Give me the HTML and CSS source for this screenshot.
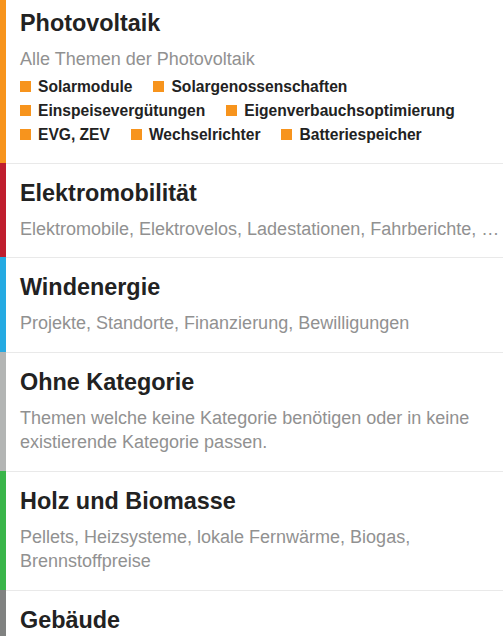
FILE: index.html
```html
<!DOCTYPE html>
<html lang="de">
<head>
<meta charset="utf-8">
<title>Kategorien</title>
<link rel="stylesheet" href="styles.css">
</head>
<body>
<div class="category-list">
  <div class="category-box c-orange">
    <div class="category-inner">
      <h3 class="category-title">Photovoltaik</h3>
      <div class="category-desc">Alle Themen der Photovoltaik</div>
      <div class="subcategories">
        <span class="subcat"><span class="sq"></span>Solarmodule</span>
        <span class="subcat"><span class="sq"></span>Solargenossenschaften</span>
        <span class="subcat"><span class="sq"></span>Einspeisevergütungen</span>
        <span class="subcat"><span class="sq"></span>Eigenverbauchsoptimierung</span>
        <span class="subcat"><span class="sq"></span>EVG, ZEV</span>
        <span class="subcat"><span class="sq"></span>Wechselrichter</span>
        <span class="subcat"><span class="sq"></span>Batteriespeicher</span>
      </div>
    </div>
  </div>
  <div class="category-box c-red">
    <div class="category-inner">
      <h3 class="category-title">Elektromobilität</h3>
      <div class="category-desc single">Elektromobile, Elektrovelos, Ladestationen, Fahrberichte, …</div>
    </div>
  </div>
  <div class="category-box c-blue">
    <div class="category-inner">
      <h3 class="category-title">Windenergie</h3>
      <div class="category-desc">Projekte, Standorte, Finanzierung, Bewilligungen</div>
    </div>
  </div>
  <div class="category-box c-gray">
    <div class="category-inner">
      <h3 class="category-title">Ohne Kategorie</h3>
      <div class="category-desc">Themen welche keine Kategorie benötigen oder in keine existierende Kategorie passen.</div>
    </div>
  </div>
  <div class="category-box c-green">
    <div class="category-inner">
      <h3 class="category-title">Holz und Biomasse</h3>
      <div class="category-desc">Pellets, Heizsysteme, lokale Fernwärme, Biogas, Brennstoffpreise</div>
    </div>
  </div>
  <div class="category-box c-darkgray">
    <div class="category-inner">
      <h3 class="category-title">Gebäude</h3>
      <div class="category-desc">Energieeffizienz, Sanierung, Dämmung, Heizung</div>
    </div>
  </div>
</div>
</body>
</html>
```
FILE: styles.css
```css
html, body {
  margin: 0;
  padding: 0;
  background: #fff;
}
body {
  font-family: "Liberation Sans", Arial, sans-serif;
  color: #222;
  height: 636px;
  overflow: hidden;
}
.category-list {
  margin-top: -6px;
}
.category-box {
  display: flex;
  border-left: 6px solid #b3b5b4;
}
.c-orange { border-left-color: #f7941d; }
.c-red { border-left-color: #bf1e2e; }
.c-blue { border-left-color: #25aae2; }
.c-gray { border-left-color: #b3b5b4; }
.c-green { border-left-color: #3ab54a; }
.c-darkgray { border-left-color: #808281; }
.category-inner {
  flex: 1;
  min-width: 0;
  padding: 15px 14px 16px 14px;
}
.category-box + .category-box .category-inner {
  border-top: 1px solid #e9e9e9;
}
.category-title {
  margin: 0 0 10px 0;
  font-size: 23.4px;
  line-height: 28px;
  font-weight: bold;
  color: #222;
}
.category-desc {
  font-size: 18px;
  line-height: 24.5px;
  color: #919191;
}
.category-desc.single {
  white-space: nowrap;
  margin-right: -14px;
}
.subcategories {
  display: flex;
  flex-wrap: wrap;
  column-gap: 21px;
  margin-top: 3px;
}
.subcat {
  display: flex;
  align-items: center;
  gap: 7px;
  font-size: 15.6px;
  line-height: 24px;
  font-weight: bold;
  color: #222;
}
.sq {
  width: 11px;
  height: 11px;
  background: #f7941d;
  flex: none;
  margin-top: -1px;
}
```
